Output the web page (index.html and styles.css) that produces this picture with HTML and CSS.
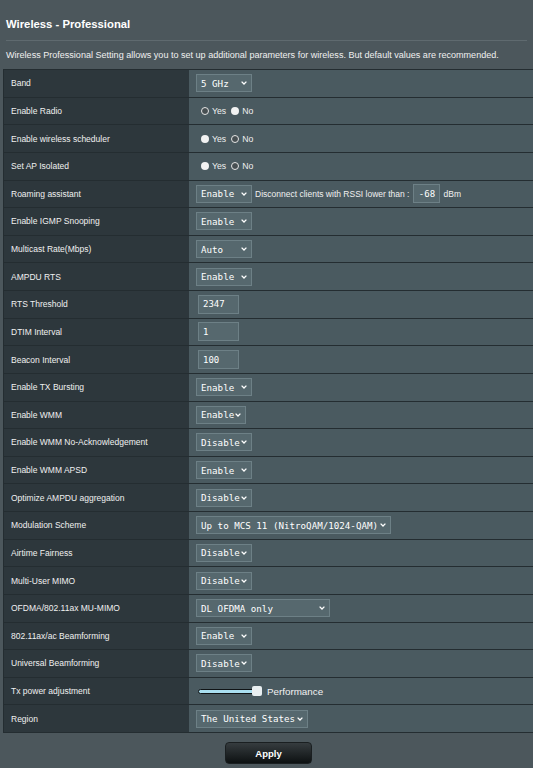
FILE: index.html
```html
<!DOCTYPE html>
<html>
<head>
<meta charset="utf-8">
<link rel="stylesheet" href="styles.css">
</head>
<body>
<div class="page">
  <div class="title">Wireless - Professional</div>
  <div class="hr"></div>
  <div class="desc">Wireless Professional Setting allows you to set up additional parameters for wireless. But default values are recommended.</div>

  <div class="table">
    <div class="row"><div class="label">Band</div><div class="value"><span class="sel w56"><span>5 GHz</span><svg class="chev" viewBox="0 0 6 4"><path d="M0.6 0.6 L3 3 L5.4 0.6"/></svg></span></div></div>
    <div class="row"><div class="label">Enable Radio</div><div class="value"><span class="radio hollow"></span><span class="rtext">Yes</span><span class="radio filled"></span><span class="rtext">No</span></div></div>
    <div class="row"><div class="label">Enable wireless scheduler</div><div class="value"><span class="radio filled"></span><span class="rtext">Yes</span><span class="radio hollow"></span><span class="rtext">No</span></div></div>
    <div class="row"><div class="label">Set AP Isolated</div><div class="value"><span class="radio filled"></span><span class="rtext">Yes</span><span class="radio hollow"></span><span class="rtext">No</span></div></div>
    <div class="row"><div class="label">Roaming assistant</div><div class="value"><span class="sel w56"><span>Enable</span><svg class="chev" viewBox="0 0 6 4"><path d="M0.6 0.6 L3 3 L5.4 0.6"/></svg></span><span class="inline-text">Disconnect clients with RSSI lower than :</span><span class="inp w27">-68</span><span class="unit">dBm</span></div></div>
    <div class="row"><div class="label">Enable IGMP Snooping</div><div class="value"><span class="sel w56"><span>Enable</span><svg class="chev" viewBox="0 0 6 4"><path d="M0.6 0.6 L3 3 L5.4 0.6"/></svg></span></div></div>
    <div class="row"><div class="label">Multicast Rate(Mbps)</div><div class="value"><span class="sel w56"><span>Auto</span><svg class="chev" viewBox="0 0 6 4"><path d="M0.6 0.6 L3 3 L5.4 0.6"/></svg></span></div></div>
    <div class="row"><div class="label">AMPDU RTS</div><div class="value"><span class="sel w56"><span>Enable</span><svg class="chev" viewBox="0 0 6 4"><path d="M0.6 0.6 L3 3 L5.4 0.6"/></svg></span></div></div>
    <div class="row"><div class="label">RTS Threshold</div><div class="value"><span class="inp w41">2347</span></div></div>
    <div class="row"><div class="label">DTIM Interval</div><div class="value"><span class="inp w41">1</span></div></div>
    <div class="row"><div class="label">Beacon Interval</div><div class="value"><span class="inp w41">100</span></div></div>
    <div class="row"><div class="label">Enable TX Bursting</div><div class="value"><span class="sel w56"><span>Enable</span><svg class="chev" viewBox="0 0 6 4"><path d="M0.6 0.6 L3 3 L5.4 0.6"/></svg></span></div></div>
    <div class="row"><div class="label">Enable WMM</div><div class="value"><span class="sel w50"><span>Enable</span><svg class="chev" viewBox="0 0 6 4"><path d="M0.6 0.6 L3 3 L5.4 0.6"/></svg></span></div></div>
    <div class="row"><div class="label">Enable WMM No-Acknowledgement</div><div class="value"><span class="sel w56"><span>Disable</span><svg class="chev" viewBox="0 0 6 4"><path d="M0.6 0.6 L3 3 L5.4 0.6"/></svg></span></div></div>
    <div class="row"><div class="label">Enable WMM APSD</div><div class="value"><span class="sel w56"><span>Enable</span><svg class="chev" viewBox="0 0 6 4"><path d="M0.6 0.6 L3 3 L5.4 0.6"/></svg></span></div></div>
    <div class="row"><div class="label">Optimize AMPDU aggregation</div><div class="value"><span class="sel w56"><span>Disable</span><svg class="chev" viewBox="0 0 6 4"><path d="M0.6 0.6 L3 3 L5.4 0.6"/></svg></span></div></div>
    <div class="row"><div class="label">Modulation Scheme</div><div class="value"><span class="sel w195"><span>Up to MCS 11 (NitroQAM/1024-QAM)</span><svg class="chev" viewBox="0 0 6 4"><path d="M0.6 0.6 L3 3 L5.4 0.6"/></svg></span></div></div>
    <div class="row"><div class="label">Airtime Fairness</div><div class="value"><span class="sel w56"><span>Disable</span><svg class="chev" viewBox="0 0 6 4"><path d="M0.6 0.6 L3 3 L5.4 0.6"/></svg></span></div></div>
    <div class="row"><div class="label">Multi-User MIMO</div><div class="value"><span class="sel w56"><span>Disable</span><svg class="chev" viewBox="0 0 6 4"><path d="M0.6 0.6 L3 3 L5.4 0.6"/></svg></span></div></div>
    <div class="row"><div class="label">OFDMA/802.11ax MU-MIMO</div><div class="value"><span class="sel w134"><span>DL OFDMA only</span><svg class="chev" viewBox="0 0 6 4"><path d="M0.6 0.6 L3 3 L5.4 0.6"/></svg></span></div></div>
    <div class="row"><div class="label">802.11ax/ac Beamforming</div><div class="value"><span class="sel w56"><span>Enable</span><svg class="chev" viewBox="0 0 6 4"><path d="M0.6 0.6 L3 3 L5.4 0.6"/></svg></span></div></div>
    <div class="row"><div class="label">Universal Beamforming</div><div class="value"><span class="sel w56"><span>Disable</span><svg class="chev" viewBox="0 0 6 4"><path d="M0.6 0.6 L3 3 L5.4 0.6"/></svg></span></div></div>
    <div class="row"><div class="label">Tx power adjustment</div><div class="value"><span class="slider"><span class="track"></span><span class="thumb"></span></span><span class="perf">Performance</span></div></div>
    <div class="row"><div class="label">Region</div><div class="value"><span class="sel w112"><span>The United States</span><svg class="chev" viewBox="0 0 6 4"><path d="M0.6 0.6 L3 3 L5.4 0.6"/></svg></span></div></div>
  </div>

  <div class="actions"><button class="apply">Apply</button></div>
</div>
</body>
</html>
```
FILE: styles.css
```css
* { box-sizing: border-box; }
html, body { margin: 0; padding: 0; }
body {
  background: #4c575c;
  font-family: "Liberation Sans", Arial, sans-serif;
  color: #f2f2f2;
  width: 533px;
  height: 768px;
  overflow: hidden;
}
.page { display: flex; flex-direction: column; }
.title {
  height: 40px;
  padding: 17px 6px 0;
  font-size: 11.3px;
  line-height: 14px;
  font-weight: bold;
  color: #ffffff;
}
.hr { height: 1px; margin: 0 6px; background: #5f6a6f; }
.desc {
  height: 28px;
  line-height: 28px;
  padding-left: 6px;
  font-size: 9.05px;
  color: #f0f0f0;
  white-space: nowrap;
}
.table {
  margin-left: 3px;
  border-top: 1px solid #242d31;
  border-left: 1px solid #242d31;
}
.row {
  display: flex;
  height: 27.625px;
  border-bottom: 1px solid #242d31;
}
.label {
  width: 185px;
  flex: none;
  background: #2d373c;
  padding-left: 7px;
  display: flex;
  align-items: center;
  font-size: 8.5px;
  color: #f0f0f0;
  white-space: nowrap;
}
.value {
  flex: 1;
  background: #4a5a60;
  padding-left: 7px;
  display: flex;
  align-items: center;
  font-size: 8.5px;
  white-space: nowrap;
}
.sel {
  height: 18px;
  display: flex;
  align-items: center;
  justify-content: space-between;
  padding: 0 4px 0 4px;
  background: #56686e;
  border: 1px solid #6d8086;
  font-family: "DejaVu Sans Mono", monospace;
  font-size: 9.2px;
  color: #ffffff;
}
.w50 { width: 50px; }
.w56 { width: 56px; }
.w112 { width: 112px; }
.w134 { width: 134px; }
.w195 { width: 195px; }
.chev {
  width: 6px;
  height: 4px;
  fill: none;
  stroke: #ffffff;
  stroke-width: 1.3;
  flex: none;
}
.radio {
  width: 8px;
  height: 8px;
  border-radius: 50%;
  flex: none;
  margin-left: 5px;
}
.radio.hollow { border: 1.5px solid #e6e6e6; background: #474f52; }
.radio.filled { background: #f2f2f2; }
.rtext { margin-left: 3px; font-size: 8.7px; color: #f0f0f0; }
.inline-text { margin-left: 3px; color: #f0f0f0; }
.inp {
  height: 19px;
  display: flex;
  align-items: center;
  padding-left: 4px;
  background: #56686e;
  border: 1px solid #6d8086;
  font-family: "DejaVu Sans Mono", monospace;
  font-size: 9px;
  color: #ffffff;
}
.w41 { width: 41px; margin-left: 2px; }
.w27 { width: 27px; margin-left: 4px; justify-content: center; padding-left: 0; }
.unit { margin-left: 3px; }
.slider {
  position: relative;
  width: 66px;
  height: 10px;
  margin-left: 2px;
  display: flex;
  align-items: center;
}
.track {
  width: 58px;
  height: 5px;
  border: 1px solid #101416;
  border-radius: 3px;
  background: #a9dff0;
}
.thumb {
  position: absolute;
  left: 54px;
  top: 0;
  width: 10px;
  height: 10px;
  border-radius: 2px;
  background: #e9eff1;
}
.perf { margin-left: 3px; font-size: 9.8px; color: #f2f2f2; }
.actions {
  display: flex;
  justify-content: center;
  padding-left: 4px;
  margin-top: 9px;
}
.apply {
  width: 87px;
  height: 22px;
  border: 1px solid #1a1f21;
  border-radius: 4px;
  background: linear-gradient(#363c3f, #0d1112);
  color: #ffffff;
  font-family: "Liberation Sans", Arial, sans-serif;
  font-weight: bold;
  font-size: 9.5px;
  padding: 0;
}
```
